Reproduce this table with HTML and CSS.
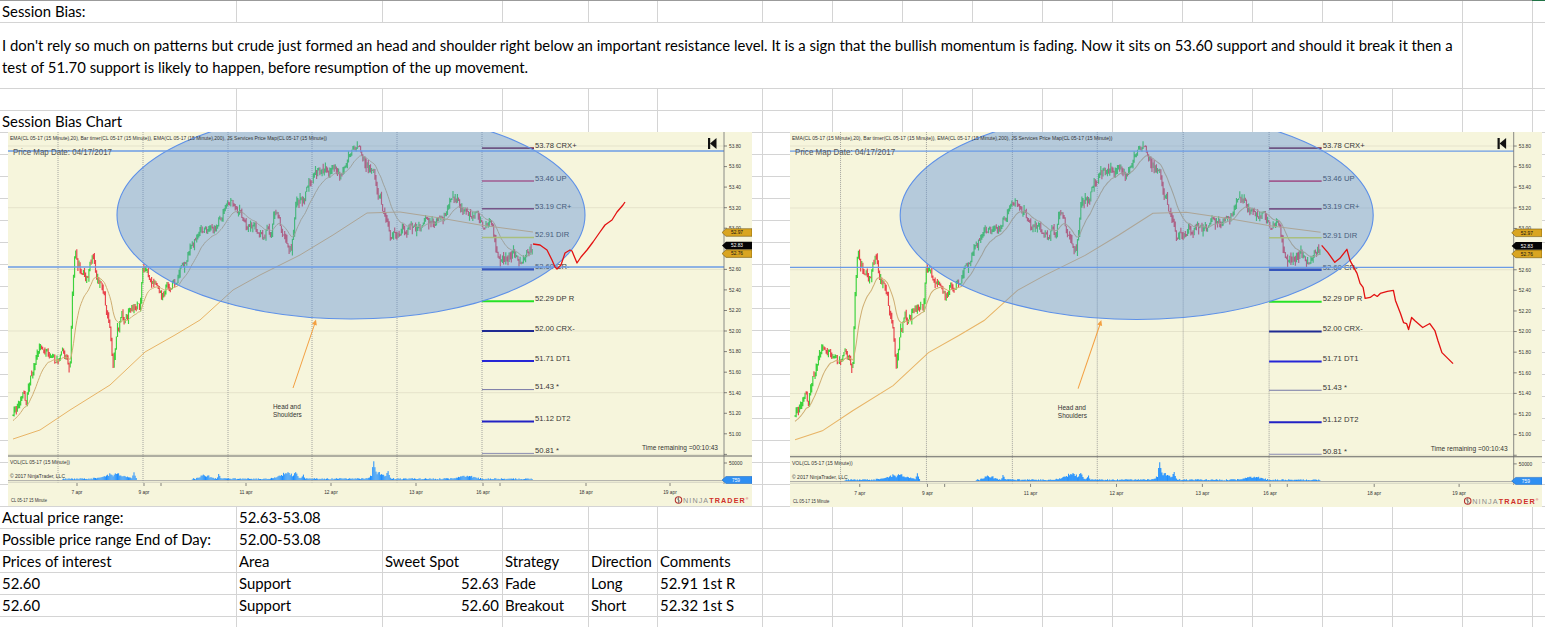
FILE: index.html
```html
<!DOCTYPE html>
<html lang="en">
<head>
<meta charset="utf-8">
<title>Session Bias</title>
<link rel="stylesheet" href="styles.css">
</head>
<body>
<div class="sheet">
  <!-- row 1 -->
  <div class="c">Session Bias:</div><div class="c"></div><div class="c"></div><div class="c"></div><div class="c"></div><div class="c"></div><div class="c"></div><div class="c"></div><div class="c"></div><div class="c"></div><div class="c"></div><div class="c"></div><div class="c"></div><div class="c"></div><div class="c"></div><div class="c"></div><div class="c"></div><div class="c"></div>
  <!-- row 2 -->
  <div class="c para">I don't rely so much on patterns but crude just formed an head and shoulder right below an important resistance level. It is a sign that the bullish momentum is fading. Now it sits on 53.60 support and should it break it then a test of 51.70 support is likely to happen, before resumption of the up movement.</div><div class="c"></div><div class="c"></div>
  <!-- row 3 -->
  <div class="c"></div><div class="c"></div><div class="c"></div><div class="c"></div><div class="c"></div><div class="c"></div><div class="c"></div><div class="c"></div><div class="c"></div><div class="c"></div><div class="c"></div><div class="c"></div><div class="c"></div><div class="c"></div><div class="c"></div><div class="c"></div><div class="c"></div><div class="c"></div>
  <!-- row 4 -->
  <div class="c">Session Bias Chart</div><div class="c"></div><div class="c"></div><div class="c"></div><div class="c"></div><div class="c"></div><div class="c"></div><div class="c"></div><div class="c"></div><div class="c"></div><div class="c"></div><div class="c"></div><div class="c"></div><div class="c"></div><div class="c"></div><div class="c"></div><div class="c"></div><div class="c"></div>
  <!-- rows 5-21 (under the charts) -->
  <div class="band">
    <div class="bc"></div><div class="bc"></div><div class="bc"></div><div class="bc"></div><div class="bc"></div><div class="bc"></div><div class="bc"></div><div class="bc"></div><div class="bc"></div><div class="bc"></div><div class="bc"></div><div class="bc"></div><div class="bc"></div><div class="bc"></div><div class="bc"></div><div class="bc"></div><div class="bc"></div><div class="bc"></div>
  </div>
  <!-- row 22 -->
  <div class="c">Actual price range:</div><div class="c">52.63-53.08</div><div class="c"></div><div class="c"></div><div class="c"></div><div class="c"></div><div class="c"></div><div class="c"></div><div class="c"></div><div class="c"></div><div class="c"></div><div class="c"></div><div class="c"></div><div class="c"></div><div class="c"></div><div class="c"></div><div class="c"></div><div class="c"></div>
  <!-- row 23 -->
  <div class="c">Possible price range End of Day:</div><div class="c">52.00-53.08</div><div class="c"></div><div class="c"></div><div class="c"></div><div class="c"></div><div class="c"></div><div class="c"></div><div class="c"></div><div class="c"></div><div class="c"></div><div class="c"></div><div class="c"></div><div class="c"></div><div class="c"></div><div class="c"></div><div class="c"></div><div class="c"></div>
  <!-- row 24 -->
  <div class="c">Prices of interest</div><div class="c">Area</div><div class="c">Sweet Spot</div><div class="c">Strategy</div><div class="c">Direction</div><div class="c">Comments</div><div class="c"></div><div class="c"></div><div class="c"></div><div class="c"></div><div class="c"></div><div class="c"></div><div class="c"></div><div class="c"></div><div class="c"></div><div class="c"></div><div class="c"></div><div class="c"></div>
  <!-- row 25 -->
  <div class="c">52.60</div><div class="c">Support</div><div class="c r">52.63</div><div class="c">Fade</div><div class="c">Long</div><div class="c">52.91 1st R</div><div class="c"></div><div class="c"></div><div class="c"></div><div class="c"></div><div class="c"></div><div class="c"></div><div class="c"></div><div class="c"></div><div class="c"></div><div class="c"></div><div class="c"></div><div class="c"></div>
  <!-- row 26 -->
  <div class="c">52.60</div><div class="c">Support</div><div class="c r">52.60</div><div class="c">Breakout</div><div class="c">Short</div><div class="c">52.32 1st S</div><div class="c"></div><div class="c"></div><div class="c"></div><div class="c"></div><div class="c"></div><div class="c"></div><div class="c"></div><div class="c"></div><div class="c"></div><div class="c"></div><div class="c"></div><div class="c"></div>
  <!-- row 27 -->
  <div class="c"></div><div class="c"></div><div class="c"></div><div class="c"></div><div class="c"></div><div class="c"></div><div class="c"></div><div class="c"></div><div class="c"></div><div class="c"></div><div class="c"></div><div class="c"></div><div class="c"></div><div class="c"></div><div class="c"></div><div class="c"></div><div class="c"></div><div class="c"></div>

  <!-- chart 1 -->
  <svg class="chart chart-1" viewBox="0 0 744 374" preserveAspectRatio="none">
    <rect class="bg" width="744" height="374"/>
    <g class="hgrid">
      <line x1="0" y1="14" x2="716" y2="14"/><line x1="0" y1="75.7" x2="716" y2="75.7"/><line x1="0" y1="137.4" x2="716" y2="137.4"/><line x1="0" y1="199" x2="716" y2="199"/><line x1="0" y1="260.7" x2="716" y2="260.7"/><line x1="0" y1="322.4" x2="716" y2="322.4"/>
    </g>
    <g class="vgrid">
      <line x1="50" y1="0" x2="50" y2="352"/><line x1="135" y1="0" x2="135" y2="352"/><line x1="220" y1="0" x2="220" y2="352"/><line x1="304" y1="0" x2="304" y2="352"/><line x1="389" y1="0" x2="389" y2="352"/><line x1="474" y1="0" x2="474" y2="352"/>
    </g>
    <g class="vol"></g>
    <g class="bars"></g>
    <path class="ema200" d="M5 307 L32 298 L62 278 L102 253 L137 220 L167 203 L192 188 L225 158 L252 143 L292 123 L325 103 L359 81 L392 80 L432 86 L472 93 L525 100"/>
    <path class="ema20" d="M0 0"/>
    <g class="levels">
      <line class="lv l1" x1="474" y1="16.1" x2="526" y2="16.1"/><text x="527" y="16">53.78 CRX+</text>
      <line class="lv l2" x1="474" y1="49" x2="526" y2="49"/><text x="527" y="48.8">53.46 UP</text>
      <line class="lv l3" x1="474" y1="76.7" x2="526" y2="76.7"/><text x="527" y="76.5">53.19 CR+</text>
      <line class="lv l4" x1="474" y1="105.5" x2="526" y2="105.5"/><text x="527" y="105.3">52.91 DIR</text>
      <line class="lv l5" x1="474" y1="137.4" x2="526" y2="137.4"/><text x="527" y="137.2">52.60 CR-</text>
      <line class="lv l6" x1="474" y1="169.2" x2="526" y2="169.2"/><text x="527" y="169">52.29 DP R</text>
      <line class="lv l7" x1="474" y1="199" x2="526" y2="199"/><text x="527" y="198.8">52.00 CRX-</text>
      <line class="lv l8" x1="474" y1="228.9" x2="526" y2="228.9"/><text x="527" y="228.7">51.71 DT1</text>
      <line class="lv l9" x1="474" y1="257.6" x2="526" y2="257.6"/><text x="527" y="257.4">51.43 *</text>
      <line class="lv l10" x1="474" y1="289.5" x2="526" y2="289.5"/><text x="527" y="289.3">51.12 DT2</text>
      <line class="lv l11" x1="474" y1="321.4" x2="526" y2="321.4"/><text x="527" y="321.2">50.81 *</text>
    </g>
    <ellipse class="zone" cx="343" cy="83" rx="234" ry="104"/>
    <line class="hline" x1="0" y1="19" x2="716" y2="19"/>
    <line class="hline" x1="0" y1="135" x2="716" y2="135"/>
    <path class="forecast" d="M525 112 L532 113 L539 118 L544 128 L547 135 L549 137 L553 133 L557 121 L562 118 L564 119 L569 131 L573 125 L579 118 L585 110 L592 100 L597 93 L604 88 L609 80 L615 73 L617 70"/>
    <line class="arrow" x1="285" y1="256" x2="307" y2="191"/>
    <polygon class="arrow-head" points="308,187.5 308.8,193.5 304,191.9"/>
    <text class="note" x="265" y="277">Head and</text>
    <text class="note" x="265" y="285">Shoulders</text>
    <text class="hdr" x="2" y="8" textLength="317" lengthAdjust="spacingAndGlyphs">EMA(CL 05-17 (15 Minute),20), Bar timer(CL 05-17 (15 Minute)), EMA(CL 05-17 (15 Minute),200), JS Services Price Map(CL 05-17 (15 Minute))</text>
    <text class="pmd" x="5" y="22.5" textLength="99" lengthAdjust="spacingAndGlyphs">Price Map Date: 04/17/2017</text>
    <rect class="btn" x="700" y="6" width="2.2" height="11"/>
    <polygon class="btn" points="702,11.5 708.5,6 708.5,17"/>
    <line class="axis" x1="716" y1="0" x2="716" y2="352"/>
    <g class="ticks">
      <line x1="716" y1="14" x2="719" y2="14"/><line x1="716" y1="34.6" x2="719" y2="34.6"/><line x1="716" y1="55.1" x2="719" y2="55.1"/><line x1="716" y1="75.7" x2="719" y2="75.7"/><line x1="716" y1="96.2" x2="719" y2="96.2"/><line x1="716" y1="137.4" x2="719" y2="137.4"/><line x1="716" y1="157.9" x2="719" y2="157.9"/><line x1="716" y1="178.5" x2="719" y2="178.5"/><line x1="716" y1="199" x2="719" y2="199"/><line x1="716" y1="219.6" x2="719" y2="219.6"/><line x1="716" y1="240.2" x2="719" y2="240.2"/><line x1="716" y1="260.7" x2="719" y2="260.7"/><line x1="716" y1="281.3" x2="719" y2="281.3"/><line x1="716" y1="301.8" x2="719" y2="301.8"/><line x1="716" y1="322.4" x2="719" y2="322.4"/><line x1="716" y1="331" x2="719" y2="331"/>
    </g>
    <g class="ax">
      <text x="721" y="15.8">53.80</text><text x="721" y="36.4">53.60</text><text x="721" y="56.9">53.40</text><text x="721" y="77.5">53.20</text><text x="721" y="98">53.00</text><text x="721" y="139.2">52.60</text><text x="721" y="159.7">52.40</text><text x="721" y="180.3">52.20</text><text x="721" y="200.8">52.00</text><text x="721" y="221.4">51.80</text><text x="721" y="242">51.60</text><text x="721" y="262.5">51.40</text><text x="721" y="283.1">51.20</text><text x="721" y="303.6">51.00</text><text x="721" y="332.8">50000</text>
    </g>
    <polygon class="badge-gold" points="714,100.5 718,96.7 744,96.7 744,104.3 718,104.3"/><text class="bt" x="723" y="102.3">52.97</text>
    <polygon class="badge-black" points="714,113.6 718,109.8 744,109.8 744,117.4 718,117.4"/><text class="bt bt-w" x="723" y="115.4">52.83</text>
    <polygon class="badge-gold" points="714,121.6 718,117.8 744,117.8 744,125.4 718,125.4"/><text class="bt" x="723" y="123.4">52.76</text>
    <text class="tr" x="634" y="318" textLength="76" lengthAdjust="spacingAndGlyphs">Time remaining =00:10:43</text>
    <line class="sep" x1="0" y1="324" x2="744" y2="324"/>
    <text class="small" x="2" y="332" textLength="60" lengthAdjust="spacingAndGlyphs">VOL(CL 05-17 (15 Minute))</text>
    <text class="small" x="2" y="346" textLength="55" lengthAdjust="spacingAndGlyphs">© 2017 NinjaTrader, LLC</text>
    <line class="base1" x1="0" y1="348.6" x2="716" y2="348.6"/>
    <line class="base2" x1="0" y1="350.4" x2="716" y2="350.4"/>
    <polygon class="badge-blue" points="714,348 718,344.5 744,344.5 744,351.5 718,351.5"/><text class="bt bt-w" x="724" y="349.8">759</text>
    <g class="xticks">
      <line x1="69" y1="351" x2="69" y2="354"/><line x1="136" y1="351" x2="136" y2="354"/><line x1="153" y1="351" x2="153" y2="354"/><line x1="238" y1="351" x2="238" y2="354"/><line x1="323" y1="351" x2="323" y2="354"/><line x1="408" y1="351" x2="408" y2="354"/><line x1="475" y1="351" x2="475" y2="354"/><line x1="492" y1="351" x2="492" y2="354"/><line x1="578" y1="351" x2="578" y2="354"/><line x1="662" y1="351" x2="662" y2="354"/>
    </g>
    <g class="xl">
      <text x="69" y="362">7 apr</text><text x="136" y="362">9 apr</text><text x="238" y="362">11 apr</text><text x="323" y="362">12 apr</text><text x="408" y="362">13 apr</text><text x="475" y="362">16 apr</text><text x="578" y="362">18 apr</text><text x="662" y="362">19 apr</text>
    </g>
    <text class="small" x="3" y="370" textLength="36" lengthAdjust="spacingAndGlyphs">CL 05-17 15 Minute</text>
    <circle class="logo-ring" cx="670.5" cy="368" r="3.2"/>
    <path class="logo-mark" d="M668.6 366.2 L672.4 369.8 M670.5 364.8 V371.2"/>
    <text class="logo" x="675" y="370.6"><tspan class="ninja">NINJA</tspan><tspan class="trader">TRADER</tspan><tspan class="reg" dy="-2.2">®</tspan></text>
  </svg>

  <!-- chart 2 -->
  <svg class="chart chart-2" viewBox="0 0 744 374" preserveAspectRatio="none">
    <rect class="bg" width="744" height="374"/>
    <g class="hgrid">
      <line x1="0" y1="14" x2="716" y2="14"/><line x1="0" y1="75.7" x2="716" y2="75.7"/><line x1="0" y1="137.4" x2="716" y2="137.4"/><line x1="0" y1="199" x2="716" y2="199"/><line x1="0" y1="260.7" x2="716" y2="260.7"/><line x1="0" y1="322.4" x2="716" y2="322.4"/>
    </g>
    <g class="vgrid">
      <line x1="50" y1="0" x2="50" y2="352"/><line x1="135" y1="0" x2="135" y2="352"/><line x1="220" y1="0" x2="220" y2="352"/><line x1="304" y1="0" x2="304" y2="352"/><line x1="389" y1="0" x2="389" y2="352"/><line x1="474" y1="0" x2="474" y2="352"/>
    </g>
    <g class="vol"></g>
    <g class="bars"></g>
    <path class="ema200" d="M5 307 L32 298 L62 278 L102 253 L137 220 L167 203 L192 188 L225 158 L252 143 L292 123 L325 103 L359 81 L392 80 L432 86 L472 93 L525 100"/>
    <path class="ema20" d="M0 0"/>
    <g class="levels">
      <line class="lv l1" x1="474" y1="16.1" x2="526" y2="16.1"/><text x="527" y="16">53.78 CRX+</text>
      <line class="lv l2" x1="474" y1="49" x2="526" y2="49"/><text x="527" y="48.8">53.46 UP</text>
      <line class="lv l3" x1="474" y1="76.7" x2="526" y2="76.7"/><text x="527" y="76.5">53.19 CR+</text>
      <line class="lv l4" x1="474" y1="105.5" x2="526" y2="105.5"/><text x="527" y="105.3">52.91 DIR</text>
      <line class="lv l5" x1="474" y1="137.4" x2="526" y2="137.4"/><text x="527" y="137.2">52.60 CR-</text>
      <line class="lv l6" x1="474" y1="169.2" x2="526" y2="169.2"/><text x="527" y="169">52.29 DP R</text>
      <line class="lv l7" x1="474" y1="199" x2="526" y2="199"/><text x="527" y="198.8">52.00 CRX-</text>
      <line class="lv l8" x1="474" y1="228.9" x2="526" y2="228.9"/><text x="527" y="228.7">51.71 DT1</text>
      <line class="lv l9" x1="474" y1="257.6" x2="526" y2="257.6"/><text x="527" y="257.4">51.43 *</text>
      <line class="lv l10" x1="474" y1="289.5" x2="526" y2="289.5"/><text x="527" y="289.3">51.12 DT2</text>
      <line class="lv l11" x1="474" y1="321.4" x2="526" y2="321.4"/><text x="527" y="321.2">50.81 *</text>
    </g>
    <ellipse class="zone" cx="343" cy="83" rx="234" ry="104"/>
    <line class="hline" x1="0" y1="19" x2="716" y2="19"/>
    <line class="hline" x1="0" y1="135" x2="716" y2="135"/>
    <path class="forecast" d="M526 113 L532 120 L539 130 L544 126 L551 117 L554 128 L561 141 L564 151 L567 155 L569 166 L574 165 L578 162 L581 164 L584 161 L591 159 L597 158 L599 168 L604 181 L607 190 L610 191 L612 197 L615 185 L618 188 L626 195 L633 191 L638 198 L641 208 L645 220 L650 225 L656 231"/>
    <line class="arrow" x1="285" y1="256" x2="307" y2="191"/>
    <polygon class="arrow-head" points="308,187.5 308.8,193.5 304,191.9"/>
    <text class="note" x="265" y="277">Head and</text>
    <text class="note" x="265" y="285">Shoulders</text>
    <text class="hdr" x="2" y="8" textLength="317" lengthAdjust="spacingAndGlyphs">EMA(CL 05-17 (15 Minute),20), Bar timer(CL 05-17 (15 Minute)), EMA(CL 05-17 (15 Minute),200), JS Services Price Map(CL 05-17 (15 Minute))</text>
    <text class="pmd" x="5" y="22.5" textLength="99" lengthAdjust="spacingAndGlyphs">Price Map Date: 04/17/2017</text>
    <rect class="btn" x="700" y="6" width="2.2" height="11"/>
    <polygon class="btn" points="702,11.5 708.5,6 708.5,17"/>
    <line class="axis" x1="716" y1="0" x2="716" y2="352"/>
    <g class="ticks">
      <line x1="716" y1="14" x2="719" y2="14"/><line x1="716" y1="34.6" x2="719" y2="34.6"/><line x1="716" y1="55.1" x2="719" y2="55.1"/><line x1="716" y1="75.7" x2="719" y2="75.7"/><line x1="716" y1="96.2" x2="719" y2="96.2"/><line x1="716" y1="137.4" x2="719" y2="137.4"/><line x1="716" y1="157.9" x2="719" y2="157.9"/><line x1="716" y1="178.5" x2="719" y2="178.5"/><line x1="716" y1="199" x2="719" y2="199"/><line x1="716" y1="219.6" x2="719" y2="219.6"/><line x1="716" y1="240.2" x2="719" y2="240.2"/><line x1="716" y1="260.7" x2="719" y2="260.7"/><line x1="716" y1="281.3" x2="719" y2="281.3"/><line x1="716" y1="301.8" x2="719" y2="301.8"/><line x1="716" y1="322.4" x2="719" y2="322.4"/><line x1="716" y1="331" x2="719" y2="331"/>
    </g>
    <g class="ax">
      <text x="721" y="15.8">53.80</text><text x="721" y="36.4">53.60</text><text x="721" y="56.9">53.40</text><text x="721" y="77.5">53.20</text><text x="721" y="98">53.00</text><text x="721" y="139.2">52.60</text><text x="721" y="159.7">52.40</text><text x="721" y="180.3">52.20</text><text x="721" y="200.8">52.00</text><text x="721" y="221.4">51.80</text><text x="721" y="242">51.60</text><text x="721" y="262.5">51.40</text><text x="721" y="283.1">51.20</text><text x="721" y="303.6">51.00</text><text x="721" y="332.8">50000</text>
    </g>
    <polygon class="badge-gold" points="714,100.5 718,96.7 744,96.7 744,104.3 718,104.3"/><text class="bt" x="723" y="102.3">52.97</text>
    <polygon class="badge-black" points="714,113.6 718,109.8 744,109.8 744,117.4 718,117.4"/><text class="bt bt-w" x="723" y="115.4">52.83</text>
    <polygon class="badge-gold" points="714,121.6 718,117.8 744,117.8 744,125.4 718,125.4"/><text class="bt" x="723" y="123.4">52.76</text>
    <text class="tr" x="634" y="318" textLength="76" lengthAdjust="spacingAndGlyphs">Time remaining =00:10:43</text>
    <line class="sep" x1="0" y1="324" x2="744" y2="324"/>
    <text class="small" x="2" y="332" textLength="60" lengthAdjust="spacingAndGlyphs">VOL(CL 05-17 (15 Minute))</text>
    <text class="small" x="2" y="346" textLength="55" lengthAdjust="spacingAndGlyphs">© 2017 NinjaTrader, LLC</text>
    <line class="base1" x1="0" y1="348.6" x2="716" y2="348.6"/>
    <line class="base2" x1="0" y1="350.4" x2="716" y2="350.4"/>
    <polygon class="badge-blue" points="714,348 718,344.5 744,344.5 744,351.5 718,351.5"/><text class="bt bt-w" x="724" y="349.8">759</text>
    <g class="xticks">
      <line x1="69" y1="351" x2="69" y2="354"/><line x1="136" y1="351" x2="136" y2="354"/><line x1="153" y1="351" x2="153" y2="354"/><line x1="238" y1="351" x2="238" y2="354"/><line x1="323" y1="351" x2="323" y2="354"/><line x1="408" y1="351" x2="408" y2="354"/><line x1="475" y1="351" x2="475" y2="354"/><line x1="492" y1="351" x2="492" y2="354"/><line x1="578" y1="351" x2="578" y2="354"/><line x1="662" y1="351" x2="662" y2="354"/>
    </g>
    <g class="xl">
      <text x="69" y="362">7 apr</text><text x="136" y="362">9 apr</text><text x="238" y="362">11 apr</text><text x="323" y="362">12 apr</text><text x="408" y="362">13 apr</text><text x="475" y="362">16 apr</text><text x="578" y="362">18 apr</text><text x="662" y="362">19 apr</text>
    </g>
    <text class="small" x="3" y="370" textLength="36" lengthAdjust="spacingAndGlyphs">CL 05-17 15 Minute</text>
    <circle class="logo-ring" cx="670.5" cy="368" r="3.2"/>
    <path class="logo-mark" d="M668.6 366.2 L672.4 369.8 M670.5 364.8 V371.2"/>
    <text class="logo" x="675" y="370.6"><tspan class="ninja">NINJA</tspan><tspan class="trader">TRADER</tspan><tspan class="reg" dy="-2.2">®</tspan></text>
  </svg>
</div>
<script src="script.js"></script>
</body>
</html>
```

FILE: styles.css
```css
html, body {
  margin: 0;
  padding: 0;
  background: #ffffff;
  overflow: hidden;
}
body {
  width: 1545px;
  height: 627px;
}
.sheet {
  --cols: 237px 146px 120px 86px 69px 105px repeat(11, 70px) 13px;
  position: relative;
  display: grid;
  grid-template-columns: var(--cols);
  grid-template-rows: 22px 66px 22px 22px 374px repeat(6, 22px);
  border-top: 1px solid #9b9b9b;
  font-family: Lato, "Noto Sans", sans-serif;
  font-size: 14.9px;
  color: #000;
}
.sheet::after {
  content: "";
  position: absolute;
  top: -1px;
  left: 1532px;
  right: 0;
  height: 1px;
  background: #217346;
}
.c {
  box-sizing: border-box;
  border-right: 1px solid #d4d4d4;
  border-bottom: 1px solid #d4d4d4;
  padding: 0 2px;
  line-height: 21px;
  white-space: nowrap;
}
.c.r {
  text-align: right;
  padding-right: 3px;
}
.c.para {
  grid-column: 1 / 17;
  white-space: normal;
  line-height: 22px;
  display: flex;
  align-items: center;
}
.band {
  grid-column: 1 / -1;
  display: grid;
  grid-template-columns: var(--cols);
}
.bc {
  box-sizing: border-box;
  border-right: 1px solid #d4d4d4;
  background: repeating-linear-gradient(to bottom, transparent 0, transparent 21px, #d4d4d4 21px, #d4d4d4 22px);
}

/* charts */
.chart {
  position: absolute;
  top: 131px;
  font-family: "Liberation Sans", Arial, sans-serif;
}
.chart-1 { left: 8px; width: 744px; height: 374px; }
.chart-2 { left: 790px; width: 752px; height: 375px; }
.chart .bg { fill: #f6f5dc; }
.chart .hgrid line { stroke: #e5e3cb; stroke-width: 1; }
.chart .vgrid line { stroke: #8f8f8f; stroke-width: 0.8; stroke-dasharray: 1 1; }
.chart .ema200 { fill: none; stroke: #e8b466; stroke-width: 1; }
.chart .ema20 { fill: none; stroke: #cfae72; stroke-width: 1; }
.chart .lv { stroke-width: 1.6; }
.chart .l1 { stroke: #7a2b46; }
.chart .l2 { stroke: #d5375c; }
.chart .l3 { stroke: #8a2c4e; }
.chart .l4 { stroke: #e2e23c; }
.chart .l5 { stroke: #1a2ca6; stroke-width: 2.4; }
.chart .l6 { stroke: #26e226; stroke-width: 2; }
.chart .l7 { stroke: #1f2a92; stroke-width: 2; }
.chart .l8 { stroke: #2626d6; stroke-width: 2; }
.chart .l9 { stroke: #7577a6; stroke-width: 1; }
.chart .l10 { stroke: #2222c4; stroke-width: 2; }
.chart .l11 { stroke: #8b8db2; stroke-width: 1; }
.chart .levels text { font-size: 7.6px; fill: #363636; }
.chart .zone { fill: #5a8fd8; fill-opacity: 0.42; stroke: #5d90e8; stroke-width: 1.1; }
.chart .hline { stroke: #6b9be6; stroke-width: 1.3; }
.chart .forecast { fill: none; stroke: #e31212; stroke-width: 1.3; stroke-linejoin: round; }
.chart .arrow { stroke: #f3a042; stroke-width: 1; }
.chart .arrow-head { fill: #f3a042; }
.chart .note { font-size: 6.4px; fill: #333; }
.chart .hdr { font-size: 5px; fill: #333; }
.chart .pmd { font-size: 8.2px; fill: #555; }
.chart .btn { fill: #111; }
.chart .axis { stroke: #6e6e6e; stroke-width: 0.8; }
.chart .ticks line { stroke: #555; stroke-width: 0.7; }
.chart .ax text { font-size: 4.8px; fill: #333; }
.chart .badge-gold { fill: #d9a521; stroke: #5c4500; stroke-width: 0.5; }
.chart .badge-black { fill: #050505; }
.chart .badge-blue { fill: #2f8ff2; stroke: #1060c0; stroke-width: 0.5; }
.chart .bt { font-size: 4.8px; fill: #111; }
.chart .bt-w { fill: #fff; }
.chart .tr { font-size: 6.5px; fill: #333; }
.chart .sep { stroke: #666; stroke-width: 1; }
.chart .small { font-size: 4.6px; fill: #333; }
.chart .base1 { stroke: #9a9a9a; stroke-width: 0.8; }
.chart .base2 { stroke: #cfcfc0; stroke-width: 0.8; }
.chart .xticks line { stroke: #555; stroke-width: 0.7; }
.chart .xl text { font-size: 4.8px; fill: #333; text-anchor: middle; }
.chart .logo-ring { fill: none; stroke: #b8322e; stroke-width: 1.1; }
.chart .logo-mark { fill: none; stroke: #777; stroke-width: 0.9; }
.chart .logo { font-size: 7.2px; letter-spacing: 1.1px; }
.chart .ninja { fill: #8d8d8d; }
.chart .trader { fill: #cf2f2a; font-weight: bold; }
.chart .reg { font-size: 3.5px; fill: #cf2f2a; }
```

FILE: script.js
```js
(function () {
  var NS = 'http://www.w3.org/2000/svg';
  var OX = 8, OY = 132;
  var PRICE = [[13,415],[18,405],[22,395],[26,400],[30,380],[35,360],[40,352],[45,350],[50,356],[55,362],[60,358],[65,357],[70,365],[72,300],[75,245],[78,262],[83,272],[88,282],[92,262],[97,275],[101,288],[106,305],[110,335],[113,372],[116,345],[120,322],[126,318],[132,310],[140,305],[143,270],[147,278],[153,287],[160,292],[167,290],[174,283],[181,270],[186,262],[192,245],[197,238],[203,233],[210,230],[218,222],[226,210],[232,205],[240,212],[248,222],[256,232],[263,236],[270,228],[276,218],[282,228],[288,248],[291,252],[296,205],[302,200],[310,185],[318,172],[326,172],[334,170],[341,177],[347,162],[352,156],[357,152],[362,158],[368,165],[373,175],[378,192],[384,212],[390,230],[396,238],[402,232],[410,225],[418,232],[425,225],[432,218],[440,222],[447,212],[453,195],[458,200],[464,212],[470,215],[477,215],[483,225],[490,228],[494,237],[497,258],[502,256],[510,255],[518,257],[525,254],[531,250],[533,245]];
  var VOL = [
    {c:115,w:14,h:5},{c:134,w:1.3,h:6},{c:205,w:6,h:4},{c:219,w:1.3,h:7},
    {c:287,w:9,h:6},{c:296,w:1.3,h:6},{c:303,w:1.3,h:5},{c:374,w:1.3,h:20},
    {c:378,w:8,h:6},{c:388,w:1.3,h:6},{c:466,w:10,h:3}
  ];
  function rng(a) {
    return function () {
      a |= 0; a = a + 0x6D2B79F5 | 0;
      var t = Math.imul(a ^ a >>> 15, 1 | a);
      t = t + Math.imul(t ^ t >>> 7, 61 | t) ^ t;
      return ((t ^ t >>> 14) >>> 0) / 4294967296;
    };
  }
  function interp(x) {
    for (var i = 1; i < PRICE.length; i++) {
      if (x <= PRICE[i][0]) {
        var a = PRICE[i - 1], b = PRICE[i];
        var t = (x - a[0]) / (b[0] - a[0]);
        return a[1] + (b[1] - a[1]) * t;
      }
    }
    return PRICE[PRICE.length - 1][1];
  }
  function f(v) { return v.toFixed(1); }
  function path(d, stroke, w) {
    var p = document.createElementNS(NS, 'path');
    p.setAttribute('d', d);
    p.setAttribute('fill', 'none');
    p.setAttribute('stroke', stroke);
    p.setAttribute('stroke-width', w);
    return p;
  }
  function build(svg) {
    var r = rng(20170417);
    var up = '', dn = '', vol = '', ema = '';
    var prev = interp(13) - OY, n = 0, e = null;
    for (var xa = 13; xa <= 533; xa += 1.1) {
      var x = xa - OX, base = interp(xa) - OY;
      n = 0.6 * n + (r() - 0.5) * 10;
      var close = base + n, open = prev;
      var hi = Math.min(open, close) - r() * r() * 7;
      var lo = Math.max(open, close) + r() * r() * 7;
      var seg = 'M' + f(x) + ' ' + f(hi) + 'V' + f(lo);
      if (close < open) up += seg; else dn += seg;
      prev = close;
      e = (e === null) ? close + 6 : e + (close - e) * 2 / 21;
      ema += (ema ? 'L' : 'M') + f(x) + ' ' + f(e);
      var h = 0;
      if (xa > 62 && !(xa > 137 && xa < 192)) {
        h = 0.5 + r() * 1.3;
        for (var k = 0; k < VOL.length; k++) {
          var c = VOL[k];
          h += c.h * Math.exp(-Math.pow((xa - c.c) / c.w, 2)) * (0.6 + r() * 0.6);
        }
      }
      if (h > 0.3) vol += 'M' + f(x) + ' 348V' + f(348 - h);
    }
    svg.querySelector('.vol').appendChild(path(vol, '#1e8fff', 1));
    var g = svg.querySelector('.bars');
    g.appendChild(path(up, '#3dd23d', 1.15));
    g.appendChild(path(dn, '#e8444c', 1.15));
    svg.querySelector('.ema20').setAttribute('d', ema);
  }
  var charts = document.querySelectorAll('svg.chart');
  for (var i = 0; i < charts.length; i++) build(charts[i]);
})();
```
